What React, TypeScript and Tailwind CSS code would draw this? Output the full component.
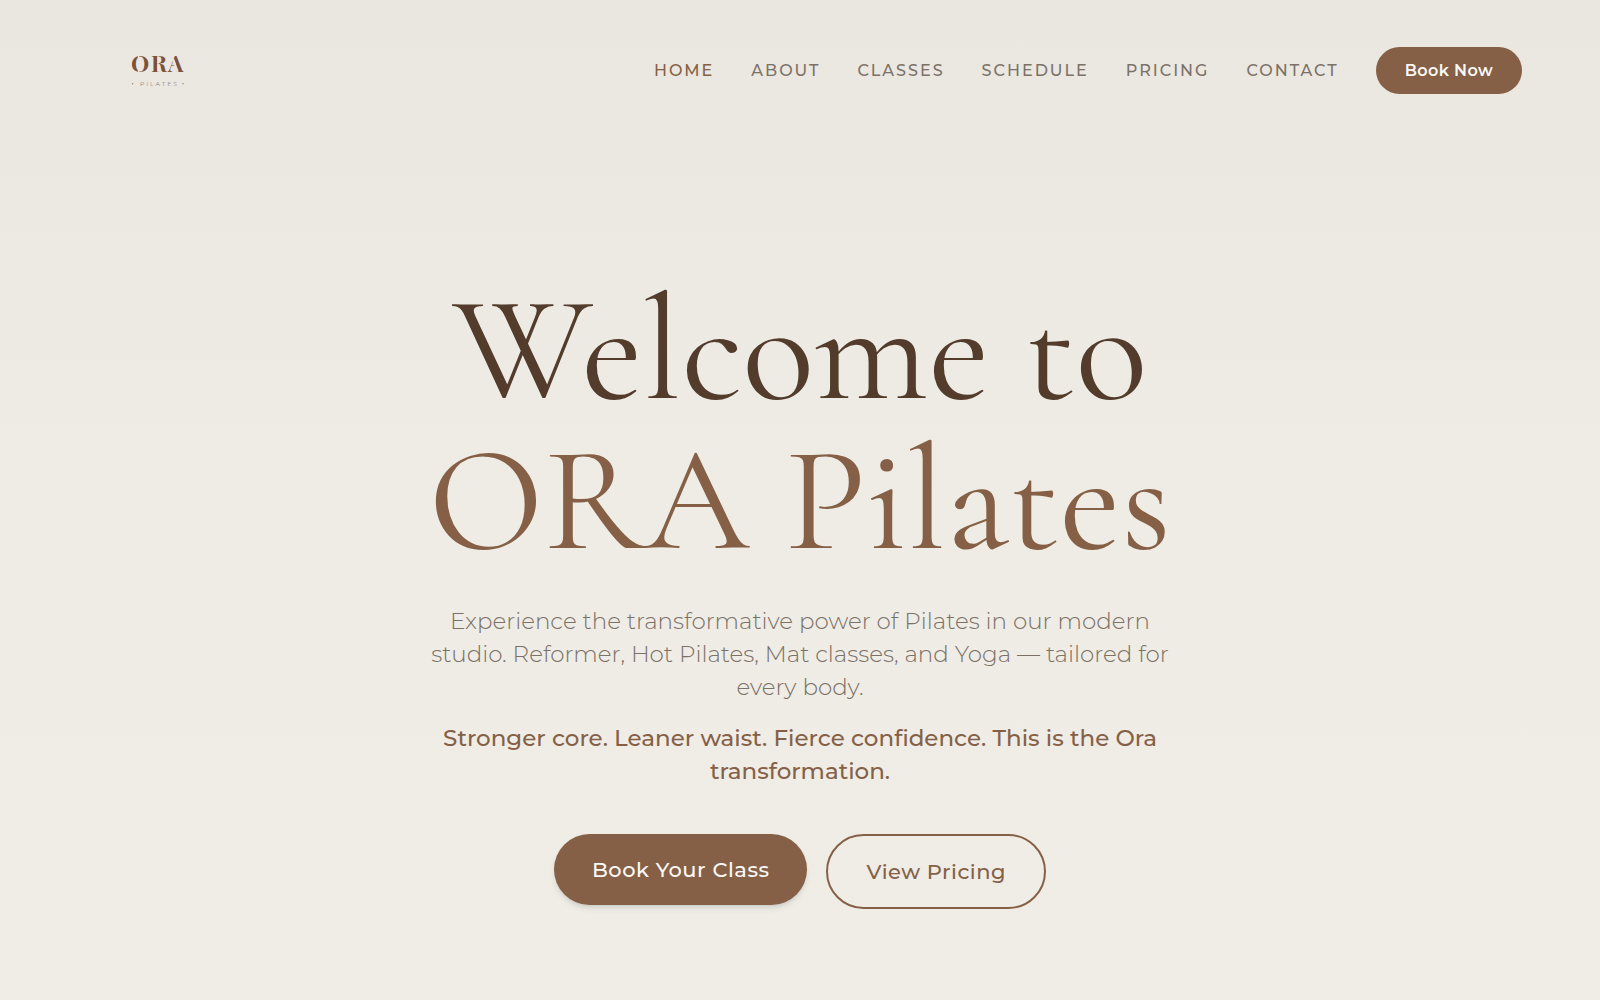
import React from 'react';

const navItems = [
  { label: 'HOME', href: '#home', active: true },
  { label: 'ABOUT', href: '#about' },
  { label: 'CLASSES', href: '#classes' },
  { label: 'SCHEDULE', href: '#schedule' },
  { label: 'PRICING', href: '#pricing' },
  { label: 'CONTACT', href: '#contact' },
];

const Logo: React.FC = () => (
  <svg className="overflow-visible" width="60" height="40" viewBox="0 0 60 40" role="img" aria-label="ORA Pilates">
    <g fill="#7d5238" fontFamily="'Playfair Display', 'Liberation Serif', serif" fontWeight="700" fontSize="23">
      <text x="3" y="21">O</text>
      <text x="23" y="21">R</text>
      <text x="40" y="21">A</text>
    </g>
    {/* stencil cuts */}
    <g stroke="#eae7e1">
      <path d="M10.5 3v20M30 3v20" strokeWidth="1.2" />
      <path d="M45.2 8l4.4 13" strokeWidth="2" />
    </g>
    <g fill="#8f857a">
      <text x="12" y="35" fontFamily="Montserrat, Inter, sans-serif" fontSize="6" letterSpacing="2">
        PILATES
      </text>
      <circle cx="4.6" cy="32.8" r="0.7" />
      <circle cx="55" cy="32.8" r="0.7" />
    </g>
  </svg>
);

const Header: React.FC = () => (
  <header className="flex items-center justify-between py-[47px] pr-[78px] pl-32">
    <a href="#home">
      <Logo />
    </a>
    <nav className="flex items-center gap-[37px]">
      {navItems.map((item) => (
        <a
          key={item.label}
          href={item.href}
          className={`text-[16px] leading-6 font-medium tracking-[2px] ${item.active ? 'text-[#856046]' : 'text-[#7b7167]'}`}
        >
          {item.label}
        </a>
      ))}
      <button
        type="button"
        className="rounded-full bg-[#856046] px-[29px] py-3 text-[16px] leading-[23px] font-semibold tracking-wide text-[#faf8f5]"
      >
        Book Now
      </button>
    </nav>
  </header>
);

const Hero: React.FC = () => (
  <main className="mx-auto flex max-w-[788px] flex-col items-center px-4 pt-[134px] pb-20 text-center">
    <h1 className="font-['Cormorant_Garamond','Liberation_Serif',serif] text-[150px] leading-[150px] whitespace-nowrap text-[#533c2c]">
      Welcome to
      <span className="block text-[#856046]">ORA Pilates</span>
    </h1>
    <p className="mt-[30px] text-[23px] leading-[33px] font-light text-[#7b7167]">
      Experience the transformative power of Pilates in our modern studio. Reformer, Hot Pilates, Mat classes, and
      Yoga — tailored for every body.
    </p>
    <p className="mt-[18px] text-[23px] leading-[33px] font-medium text-[#856046]">
      Stronger core. Leaner waist. Fierce confidence. This is the Ora transformation.
    </p>
    <div className="mt-[46px] flex items-start gap-[19px]">
      <button
        type="button"
        className="rounded-full bg-[#856046] px-[38px] py-5 text-[21px] leading-[31px] font-medium tracking-wide text-[#faf8f5] shadow-md"
      >
        Book Your Class
      </button>
      <button
        type="button"
        className="rounded-full border-2 border-[#856046] px-[38px] py-5 text-[21px] leading-[31px] font-medium tracking-wide text-[#856046]"
      >
        View Pricing
      </button>
    </div>
  </main>
);

const App: React.FC = () => {
  return (
    <div className="min-h-screen bg-linear-to-b from-[#eae7e1] via-[#eeece5] to-[#efede6] font-['Montserrat','Inter',sans-serif]">
      <Header />
      <Hero />
    </div>
  );
};

export default App;
